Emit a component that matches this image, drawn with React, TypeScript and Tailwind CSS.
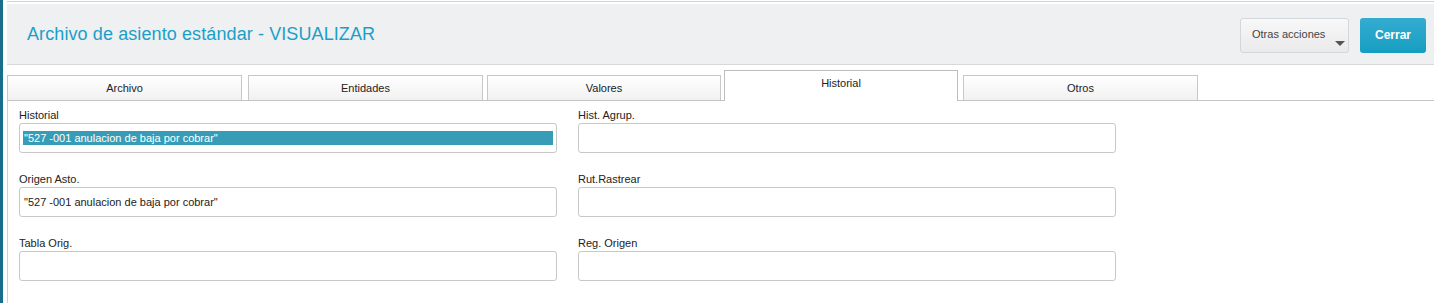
import React from 'react';

const tabs = [
    { label: 'Archivo', w: 'w-[235px]' },
    { label: 'Entidades', w: 'w-[235px]' },
    { label: 'Valores', w: 'w-[234px]' },
    { label: 'Historial', w: 'w-[234px]', active: true },
    { label: 'Otros', w: 'w-[235px]' },
];

const Field: React.FC<{ label: string; value?: string; selected?: boolean }> = ({ label, value, selected }) => (
    <div className="flex flex-col">
        <span className="text-[11px] leading-[13px] text-[#222] h-[14px]">{label}</span>
        <div className="h-[30px] w-[538px] rounded-[3px] border border-[#c8c8c8] bg-white flex items-center px-[3px]">
            {value && (
                <span
                    className={
                        selected
                            ? 'w-full bg-[#379db7] text-white text-[11px] leading-[14px] h-[14px] pl-[1px]'
                            : 'text-[#222] text-[11px] leading-[14px] pl-[1px]'
                    }
                >
                    {value}
                </span>
            )}
        </div>
    </div>
);

export default function App() {
    return (
        <div className="flex w-[1434px] h-[303px] bg-white overflow-hidden" style={{ fontFamily: '"Liberation Sans", Arial, sans-serif' }}>
            {/* left accent bar */}
            <div className="w-[3px] h-full bg-[#186f8c]" />

            <div className="flex-1 flex flex-col pl-[4px]">
                {/* top rule */}
                <div className="h-[1px]" />
                <div className="h-[1px] bg-[#cfd3d6]" />
                <div className="h-[2px]" />

                {/* header */}
                <div className="h-[61px] bg-[#eef0f1] border-b border-[#d6d9db] flex items-center justify-between pl-[20px] pr-[8px]">
                    <h1 className="text-[18px] tracking-[0.1px] text-[#1a9fc9] font-normal">Archivo de asiento estándar - VISUALIZAR</h1>
                    <div className="flex items-center gap-[11px] mt-[3px]">
                        <button className="relative h-[35px] w-[109px] rounded-[3px] border border-[#d4d7d9] bg-gradient-to-b from-[#f8f8f8] to-[#eaeaea] text-[11px] text-[#444] text-left pl-[11px] pb-[2px]">
                            Otras acciones
                            <span className="absolute right-[3px] bottom-[6px] w-0 h-0 border-l-[5px] border-r-[5px] border-t-[5px] border-l-transparent border-r-transparent border-t-[#555]" />
                        </button>
                        <button className="h-[35px] w-[66px] rounded-[3px] bg-gradient-to-b from-[#33acd0] to-[#139ec2] text-white text-[12px] font-bold pb-[2px]">
                            Cerrar
                        </button>
                    </div>
                </div>

                {/* tabs */}
                <div className="flex items-end mt-[5px] h-[31px] border-b border-[#c4c4c4]">
                    {tabs.map((t, i) => (
                        <div
                            key={t.label}
                            className={
                                (t.active
                                    ? 'h-[31px] bg-white border border-b-0 border-[#bdbdbd] -mb-[1px] pb-[6px] '
                                    : 'h-[25px] bg-gradient-to-b from-white to-[#f1f1f1] border border-b-0 border-[#c8c8c8] ') +
                                t.w +
                                (i === 1 ? ' ml-[6px]' : i === 2 ? ' ml-[4px]' : i === 3 ? ' ml-[3px]' : i === 4 ? ' ml-[5px]' : '') +
                                ' flex items-center justify-center text-[11px] text-[#222]'
                            }
                        >
                            {t.label}
                        </div>
                    ))}
                </div>

                {/* content */}
                <div className="flex-1 border-l border-[#d0d0d0] pl-[11px] pt-[8px]">
                    <div className="grid grid-cols-[538px_538px] gap-x-[21px] gap-y-[20px]">
                        <Field label="Historial" value={'"527 -001 anulacion de baja por cobrar"'} selected />
                        <Field label="Hist. Agrup." />
                        <Field label="Origen Asto." value={'"527 -001 anulacion de baja por cobrar"'} />
                        <Field label="Rut.Rastrear" />
                        <Field label="Tabla Orig." />
                        <Field label="Reg. Origen" />
                    </div>
                </div>
            </div>
        </div>
    );
}
